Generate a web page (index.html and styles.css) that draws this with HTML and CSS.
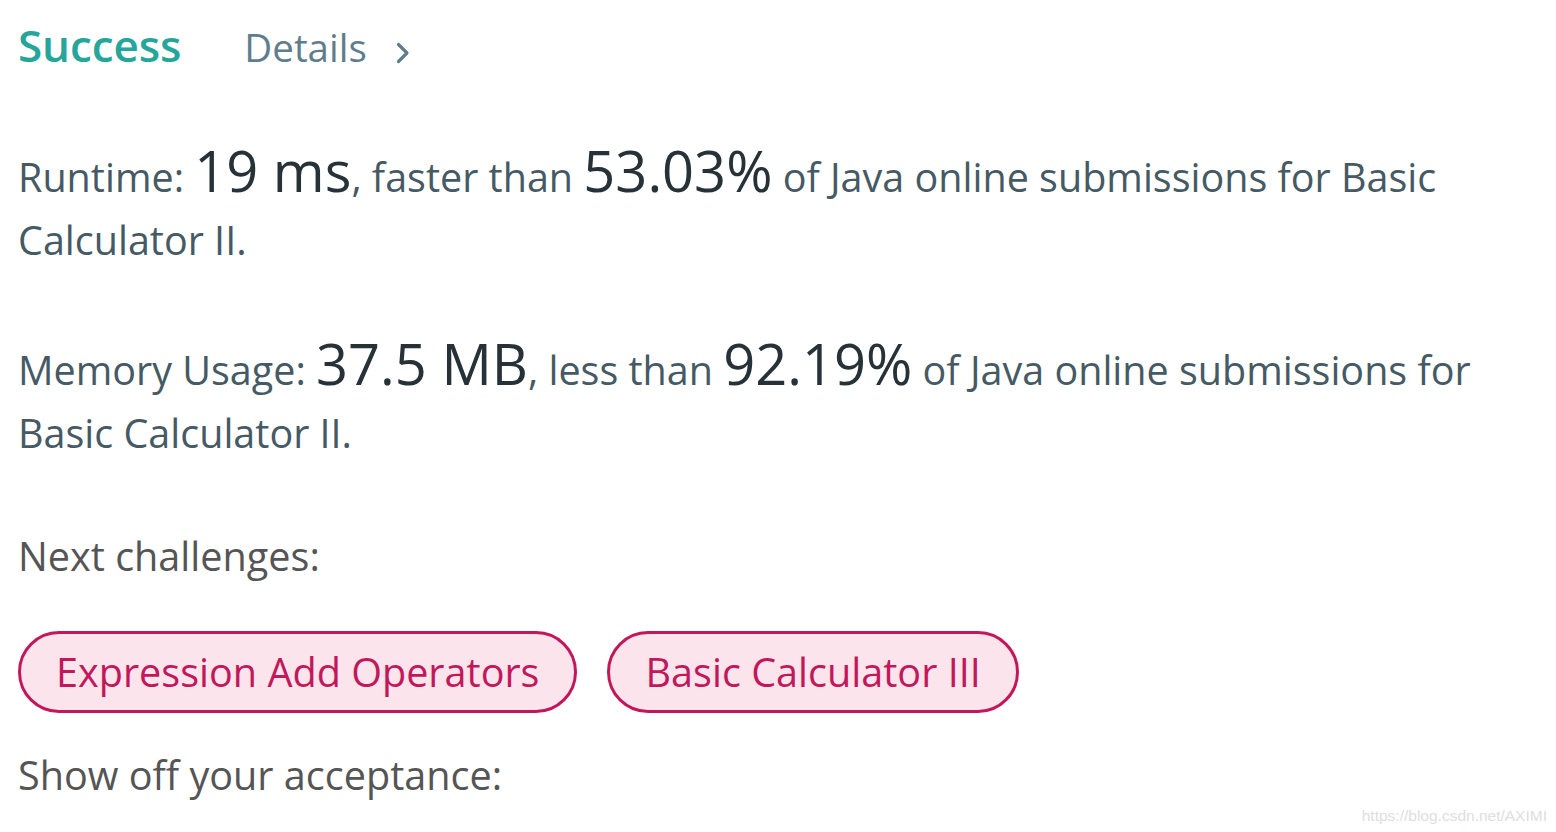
FILE: index.html
```html
<!DOCTYPE html>
<html lang="en">
<head>
<meta charset="utf-8">
<title>Submission result</title>
<link rel="stylesheet" href="styles.css">
</head>
<body>
<main class="page">
  <header class="result-head">
    <span class="status">Success</span>
    <a class="details" href="#">Details
      <svg class="chev" width="14" height="22" viewBox="0 0 14 22" aria-hidden="true"><polyline points="2.5,2.5 11,11 2.5,19.5" fill="none" stroke="currentColor" stroke-width="3.2" stroke-linecap="round" stroke-linejoin="round"/></svg>
    </a>
  </header>

  <p class="stat">Runtime: <span class="num">19 ms</span>, faster than <span class="num">53.03%</span> of Java online submissions for Basic Calculator II.</p>

  <p class="stat stat-mem">Memory Usage: <span class="num">37.5 MB</span>, less than <span class="num">92.19%</span> of Java online submissions for Basic Calculator II.</p>

  <p class="label label-next">Next challenges:</p>

  <div class="challenges">
    <a class="pill" href="#">Expression Add Operators</a>
    <a class="pill" href="#">Basic Calculator III</a>
  </div>

  <p class="label label-show">Show off your acceptance:</p>
</main>
<div class="watermark">https://blog.csdn.net/AXIMI</div>
</body>
</html>
```
FILE: styles.css
```css
html, body {
  margin: 0;
  padding: 0;
  background: #ffffff;
}

body {
  font-family: "Open Sans", "Noto Sans", sans-serif;
  width: 1556px;
  height: 832px;
  overflow: hidden;
  position: relative;
}

.page {
  padding: 15px 0 0 18px;
  width: 1518px;
}

.result-head {
  display: flex;
  align-items: baseline;
  height: 60px;
  line-height: 60px;
}

.status {
  font-size: 44px;
  font-weight: 600;
  color: #26a69a;
  letter-spacing: -0.1px;
}

.details {
  margin-left: 63px;
  font-size: 38.5px;
  color: #5f7d8c;
  text-decoration: none;
  display: inline-flex;
  align-items: baseline;
}

.chev {
  margin-left: 29px;
  position: relative;
  top: 2px;
}

.stat {
  margin: 71px 0 0;
  font-size: 39.5px;
  line-height: 63px;
  color: #455a64;
}

.stat-mem {
  margin-top: 67px;
}

.num {
  font-size: 56px;
  line-height: 0;
  color: #263238;
}

.label {
  margin: 0;
  font-size: 39.6px;
  line-height: 63px;
  color: #555555;
}

.label-next {
  margin-top: 60px;
}

.challenges {
  display: flex;
  gap: 30px;
  margin-top: 43px;
}

.pill {
  display: inline-block;
  height: 76px;
  line-height: 76px;
  padding: 0 35px;
  border: 3px solid #c2185b;
  border-radius: 41px;
  background: #fce4ec;
  color: #c2185b;
  font-size: 39.6px;
  text-decoration: none;
}

.label-show {
  margin-top: 31px;
}

.watermark {
  position: absolute;
  right: 9px;
  bottom: 7px;
  font-family: "Liberation Sans", Arial, sans-serif;
  font-size: 15.5px;
  color: #dedede;
}
```
